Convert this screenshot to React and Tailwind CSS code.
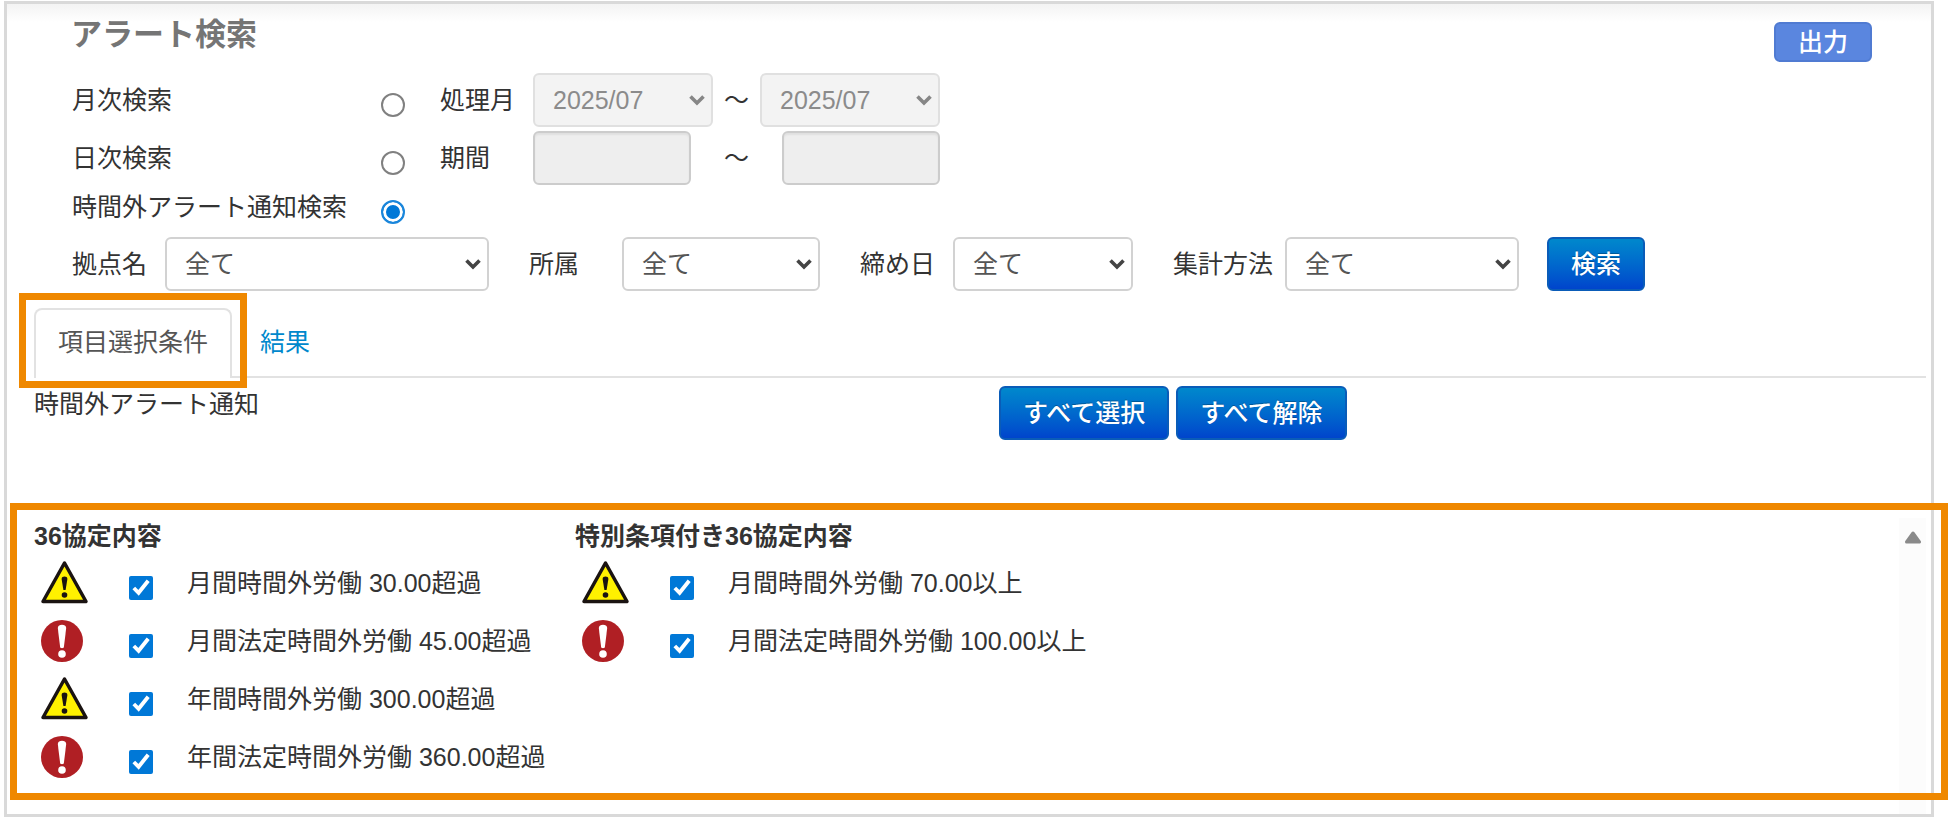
import React, { useState } from "react";

const AGREEMENTS = [
  {
    title: "36協定内容",
    items: [
      { id: "m30", level: "warning", label: "月間時間外労働 30.00超過" },
      { id: "m45", level: "danger", label: "月間法定時間外労働 45.00超過" },
      { id: "y300", level: "warning", label: "年間時間外労働 300.00超過" },
      { id: "y360", level: "danger", label: "年間法定時間外労働 360.00超過" },
    ],
  },
  {
    title: "特別条項付き36協定内容",
    items: [
      { id: "m70", level: "warning", label: "月間時間外労働 70.00以上" },
      { id: "m100", level: "danger", label: "月間法定時間外労働 100.00以上" },
    ],
  },
];

const ALL_IDS = AGREEMENTS.flatMap((group) => group.items.map((item) => item.id));

const WarningIcon = () => (
  <svg width="48" height="46" viewBox="0 0 48 46" aria-hidden="true">
    <path d="M23.5 3 L45 41.5 H2 Z" fill="#fff100" stroke="#1a1311" strokeWidth="3.5" strokeLinejoin="round" />
    <path d="M20.6 19 C20.6 15.8 26.4 15.8 26.4 19 L24.6 30 H22.4 Z" fill="#1a1311" />
    <circle cx="23.5" cy="35" r="2.8" fill="#1a1311" />
  </svg>
);

const DangerIcon = () => (
  <svg width="42" height="42" viewBox="0 0 42 42" aria-hidden="true">
    <circle cx="21" cy="21" r="21" fill="#b01f24" />
    <path d="M16.8 8 C16.8 3.6 25.2 3.6 25.2 8 L22.9 27 C22.6 28.6 19.4 28.6 19.1 27 Z" fill="#fff" />
    <circle cx="21" cy="34" r="3.8" fill="#fff" />
  </svg>
);

const Select = ({ options, className, ...props }) => (
  <div className={`relative ${className}`}>
    <select
      className="peer block h-[54px] w-full appearance-none rounded-md border-2 border-[#d2d2d2] bg-white pr-9 pl-[18px] text-[#555] disabled:border-[#e0e0e0] disabled:bg-[#f3f3f3] disabled:text-[#8b8b8b] disabled:opacity-100"
      {...props}
    >
      {options.map((option) => (
        <option key={option}>{option}</option>
      ))}
    </select>
    <svg
      className="pointer-events-none absolute top-[21px] right-2 text-[#444] peer-disabled:text-[#868686]"
      width="16"
      height="13"
      viewBox="0 0 16 13"
      aria-hidden="true"
    >
      <path d="M1.5 2.5 L8 9 L14.5 2.5" fill="none" stroke="currentColor" strokeWidth="3.6" />
    </svg>
  </div>
);

const Radio = (props) => (
  <input
    type="radio"
    name="searchType"
    className="mt-[10px] mr-[35px] size-6 shrink-0 appearance-none rounded-full border-2 border-[#808080] bg-white checked:border-[#1a86db] checked:bg-[#0078d7] checked:shadow-[inset_0_0_0_3px_#fff]"
    {...props}
  />
);

const DateInput = (props) => (
  <input
    type="text"
    className="h-[54px] w-[158px] rounded-md border-2 border-[#ccc] bg-[#eee] px-4 shadow-[inset_0_2px_2px_rgba(0,0,0,0.06)]"
    {...props}
  />
);

const PrimaryButton = ({ children, ...props }) => (
  <button
    type="button"
    className="h-[54px] rounded-md border-2 border-[#0a5cb8] bg-linear-to-b from-[#0088cc] to-[#0044cc] px-[22px] font-medium text-white [text-shadow:0_-1px_0_rgba(0,0,0,0.25)]"
    {...props}
  >
    {children}
  </button>
);

const App = () => {
  const [searchType, setSearchType] = useState("overtime");
  const [checked, setChecked] = useState(ALL_IDS);

  const toggle = (id) => {
    setChecked(checked.includes(id) ? checked.filter((c) => c !== id) : [...checked, id]);
  };

  return (
    <div className="bg-white pt-px pr-[14px] pb-[10px] pl-1 font-['Liberation_Sans','Noto_Sans_CJK_JP',sans-serif] text-[25px] leading-9 text-[#333]">
      <main className="border-3 border-[#d9d9d9] bg-white">
        <header className="flex items-start justify-between bg-linear-to-b from-[#f3f3f3] to-white to-[18px] pt-[18px] pr-[59px] pl-16">
          <h1 className="text-[31px] leading-[26px] font-bold text-[#757575]">アラート検索</h1>
          <button
            type="button"
            className="h-10 w-[98px] rounded-md border-2 border-[#507bd2] bg-[#5a86df] font-medium text-white"
          >
            出力
          </button>
        </header>

        <form className="mt-[9px] pl-[65px]">
          <div className="flex h-[58px] items-center">
            <label htmlFor="monthly" className="w-[309px]">月次検索</label>
            <Radio id="monthly" checked={searchType === "monthly"} onChange={() => setSearchType("monthly")} />
            <label htmlFor="monthFrom" className="w-[93px]">処理月</label>
            <Select id="monthFrom" className="w-[180px]" options={["2025/07"]} disabled={searchType !== "monthly"} />
            <span className="w-[47px] text-center">～</span>
            <Select
              aria-label="処理月（終了）"
              className="w-[180px]"
              options={["2025/07"]}
              disabled={searchType !== "monthly"}
            />
          </div>

          <div className="flex h-[58px] items-center">
            <label htmlFor="daily" className="w-[309px]">日次検索</label>
            <Radio id="daily" checked={searchType === "daily"} onChange={() => setSearchType("daily")} />
            <label htmlFor="dateFrom" className="w-[93px]">期間</label>
            <DateInput id="dateFrom" disabled={searchType !== "daily"} />
            <span className="w-[91px] text-center">～</span>
            <DateInput aria-label="期間（終了）" disabled={searchType !== "daily"} />
          </div>

          <div className="flex h-10 items-center">
            <label htmlFor="overtime" className="w-[309px]">時間外アラート通知検索</label>
            <Radio id="overtime" checked={searchType === "overtime"} onChange={() => setSearchType("overtime")} />
          </div>

          <div className="mt-[10px] flex items-center">
            <label htmlFor="base" className="w-[93px]">拠点名</label>
            <Select id="base" className="mr-10 w-[324px]" options={["全て"]} />
            <label htmlFor="department" className="w-[93px]">所属</label>
            <Select id="department" className="mr-10 w-[198px]" options={["全て"]} />
            <label htmlFor="closing" className="w-[93px]">締め日</label>
            <Select id="closing" className="mr-10 w-[180px]" options={["全て"]} />
            <label htmlFor="method" className="w-[112px]">集計方法</label>
            <Select id="method" className="mr-7 w-[234px]" options={["全て"]} />
            <PrimaryButton>検索</PrimaryButton>
          </div>
        </form>

        <nav className="mt-[17px] mr-[5px] ml-[27px] flex border-b-2 border-[#e2e2e2]">
          <div className="relative -mb-[2px]">
            <a
              href="#conditions"
              className="flex h-[70px] w-[198px] items-center justify-center rounded-t-lg border-2 border-b-0 border-[#e2e2e2] bg-white pb-1 text-[#555]"
            >
              項目選択条件
            </a>
            <div className="pointer-events-none absolute -inset-x-[15px] -top-[15px] -bottom-[10px] border-7 border-[#ef8800]" />
          </div>
          <a href="#results" className="flex items-center px-7 text-[#0088cc]">
            結果
          </a>
        </nav>

        <section id="conditions">
          <div className="mt-2 flex items-start pl-[27px]">
            <h2 className="w-[965px]">時間外アラート通知</h2>
            <div className="flex gap-[7px]">
              <PrimaryButton onClick={() => setChecked(ALL_IDS)}>すべて選択</PrimaryButton>
              <PrimaryButton onClick={() => setChecked([])}>すべて解除</PrimaryButton>
            </div>
          </div>

          <div className="relative mt-[78px] flex pr-[5px] pl-[27px]">
            <div className="flex grow pb-7">
              {AGREEMENTS.map((group) => (
                <div key={group.title} className="w-[541px]">
                  <h3 className="font-bold">{group.title}</h3>
                  <ul>
                    {group.items.map((item) => (
                      <li key={item.id} className="flex h-[58px] items-center">
                        <span className="flex w-[95px] justify-start pl-[7px]">
                          {item.level === "warning" ? <WarningIcon /> : <DangerIcon />}
                        </span>
                        <input
                          type="checkbox"
                          id={item.id}
                          checked={checked.includes(item.id)}
                          onChange={() => toggle(item.id)}
                          className="mt-[10px] mr-[34px] size-6 accent-[#0078d7]"
                        />
                        <label htmlFor={item.id} className="whitespace-nowrap">{item.label}</label>
                      </li>
                    ))}
                  </ul>
                </div>
              ))}
            </div>
            <div className="flex w-[27px] justify-center bg-[#fcfcfc] pt-[13px]">
              <svg width="16" height="13" viewBox="0 0 16 13" aria-hidden="true">
                <path d="M8 2 L14.5 11 H1.5 Z" fill="#8a8a8a" stroke="#8a8a8a" strokeWidth="3" strokeLinejoin="round" />
              </svg>
            </div>
            <div className="pointer-events-none absolute -top-[15px] -right-[17px] bottom-[14px] left-[3px] border-7 border-[#ef8800]" />
          </div>
        </section>
      </main>
    </div>
  );
};

export default App;
